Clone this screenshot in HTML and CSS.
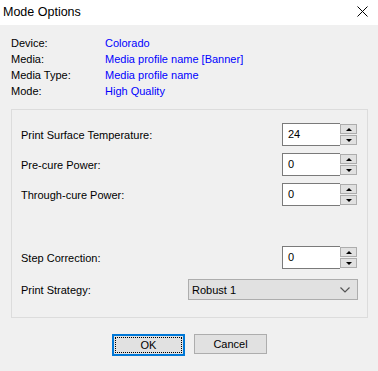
FILE: index.html
```html
<!DOCTYPE html>
<html>
<head>
<meta charset="utf-8">
<link rel="stylesheet" href="styles.css">
</head>
<body>
<div class="window">
  <div class="titlebar">
    <span class="title">Mode Options</span>
    <svg class="close" width="11" height="11" viewBox="0 0 11 11"><path d="M0.5 0.5 L10.5 10.5 M10.5 0.5 L0.5 10.5" stroke="#000" stroke-width="1" fill="none"/></svg>
  </div>
  <div class="info">
    <span class="lbl">Device:</span><span class="val">Colorado</span>
    <span class="lbl">Media:</span><span class="val">Media profile name [Banner]</span>
    <span class="lbl">Media Type:</span><span class="val">Media profile name</span>
    <span class="lbl">Mode:</span><span class="val">High Quality</span>
  </div>
  <div class="group">
    <div class="row">
      <span class="rlabel">Print Surface Temperature:</span>
      <div class="spin"><div class="box">24</div><div class="btns"><div class="sb"><span class="up"></span></div><div class="sb"><span class="down"></span></div></div></div>
    </div>
    <div class="row">
      <span class="rlabel">Pre-cure Power:</span>
      <div class="spin"><div class="box">0</div><div class="btns"><div class="sb"><span class="up"></span></div><div class="sb"><span class="down"></span></div></div></div>
    </div>
    <div class="row">
      <span class="rlabel">Through-cure Power:</span>
      <div class="spin"><div class="box">0</div><div class="btns"><div class="sb"><span class="up"></span></div><div class="sb"><span class="down"></span></div></div></div>
    </div>
    <div class="row step">
      <span class="rlabel">Step Correction:</span>
      <div class="spin"><div class="box">0</div><div class="btns"><div class="sb"><span class="up"></span></div><div class="sb"><span class="down"></span></div></div></div>
    </div>
    <div class="row strat">
      <span class="rlabel">Print Strategy:</span>
      <div class="combo"><span>Robust 1</span><svg width="10" height="6" viewBox="0 0 10 6"><path d="M0.5 0.5 L5 5 L9.5 0.5" stroke="#555" stroke-width="1.2" fill="none"/></svg></div>
    </div>
  </div>
  <div class="buttons">
    <div class="btn ok"><span class="focus">OK</span></div>
    <div class="btn">Cancel</div>
  </div>
</div>
</body>
</html>
```
FILE: styles.css
```css
html, body {
  margin: 0;
  padding: 0;
}
body {
  width: 378px;
  height: 371px;
  background: #f0f0f0;
  font-family: "Liberation Sans", Arial, sans-serif;
  font-size: 11px;
  color: #000;
  overflow: hidden;
}
.window {
  display: flex;
  flex-direction: column;
}
.titlebar {
  height: 25px;
  background: #fff;
  display: flex;
  align-items: center;
  justify-content: space-between;
  padding: 0 10px 0 3px;
}
.title {
  font-size: 12.5px;
  color: #000;
  margin-top: -1px;
}
.close {
  margin-top: -3px;
}
.info {
  display: grid;
  grid-template-columns: 94px auto;
  grid-auto-rows: 16px;
  align-items: center;
  padding: 10px 0 0 11px;
}
.val {
  color: #0000ff;
}
.group {
  margin: 10px 0 0 11px;
  width: 336px;
  height: 194px;
  border: 1px solid #dcdcdc;
  padding: 13px 10px 0 9px;
  box-sizing: content-box;
  display: flex;
  flex-direction: column;
  gap: 7px;
}
.row {
  display: flex;
  align-items: center;
  justify-content: space-between;
  height: 23px;
}
.row.step {
  margin-top: 33px;
}
.row.strat {
  margin-top: 3px;
  height: 21px;
}
.spin {
  display: flex;
  align-items: center;
  height: 23px;
}
.box {
  width: 52px;
  height: 21px;
  border: 1px solid #7a7a7a;
  border-right: none;
  background: #fff;
  padding-left: 5px;
  line-height: 20px;
  box-sizing: content-box;
}
.btns {
  width: 17px;
  height: 23px;
  display: flex;
  flex-direction: column;
  justify-content: center;
  gap: 1px;
}
.sb {
  height: 8px;
  width: 15px;
  border: 1px solid #adadad;
  background: #e1e1e1;
  display: flex;
  align-items: center;
  justify-content: center;
}
.up {
  width: 0;
  height: 0;
  border-left: 3px solid transparent;
  border-right: 3px solid transparent;
  border-bottom: 3px solid #000;
}
.down {
  width: 0;
  height: 0;
  border-left: 3px solid transparent;
  border-right: 3px solid transparent;
  border-top: 3px solid #000;
}
.combo {
  height: 19px;
  border: 1px solid #adadad;
  background: #e1e1e1;
  display: flex;
  align-items: center;
  justify-content: space-between;
  padding: 0 7px 0 3px;
  box-sizing: content-box;
  margin-right: -1px;
  width: 158px;
}
.buttons {
  display: flex;
  justify-content: center;
  gap: 9px;
  margin-top: 16px;
  padding-left: 1px;
}
.btn {
  width: 71px;
  height: 18px;
  border: 1px solid #adadad;
  background: #e1e1e1;
  display: flex;
  align-items: center;
  justify-content: center;
  box-sizing: content-box;
}
.btn.ok {
  border: 2px solid #0078d7;
  width: 67px;
  height: 16px;
  padding: 1px;
}
.focus {
  flex: 1;
  align-self: stretch;
  border: 1px dotted #000;
  display: flex;
  align-items: center;
  justify-content: center;
}
```
